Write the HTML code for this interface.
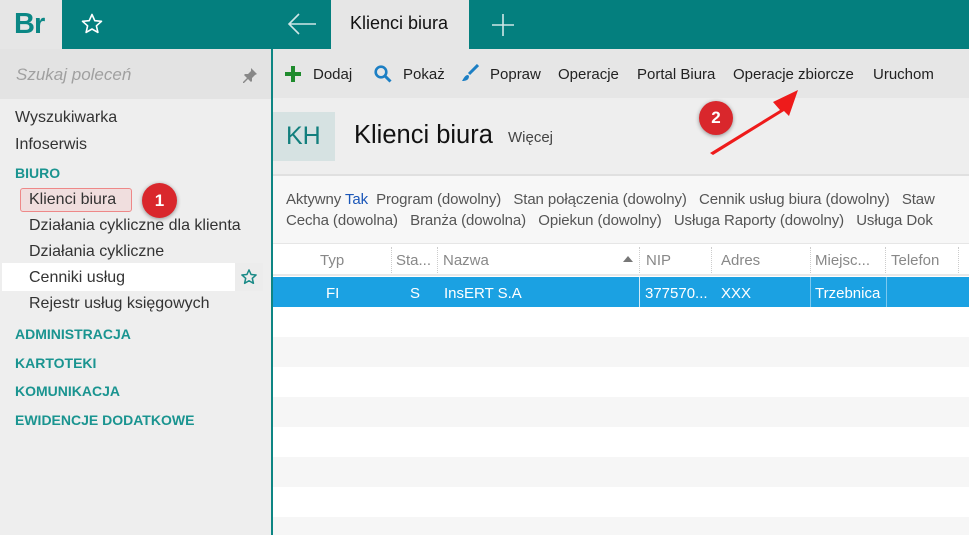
<!DOCTYPE html>
<html><head><meta charset="utf-8"><style>
*{margin:0;padding:0;box-sizing:border-box}
body{width:969px;height:535px;overflow:hidden;font-family:"Liberation Sans",sans-serif;background:#fff;position:relative;color:#222}
.abs{position:absolute}
.t{white-space:nowrap}
</style></head><body>
<div class="abs" style="left:0;top:0;width:969px;height:49px;background:#047f7e"></div>
<div class="abs" style="left:0;top:0;width:62px;height:49px;background:#e6e6e6"></div>
<div class="abs t" style="left:14px;top:8px;font-size:29px;color:#0b8785;font-weight:bold;letter-spacing:-1px">Br</div>
<svg class="abs" style="left:80px;top:12px" width="24" height="24" viewBox="0 0 24 24"><path d="M12 2.5l2.8 6.2 6.7.6-5.1 4.5 1.5 6.6L12 17l-5.9 3.4 1.5-6.6-5.1-4.5 6.7-.6z" fill="none" stroke="#fff" stroke-width="1.6" stroke-linejoin="round"/></svg>
<svg class="abs" style="left:287px;top:12px" width="30" height="24" viewBox="0 0 30 24"><path d="M2 12h27M12 2L2 12l10 10" fill="none" stroke="#cfe6e6" stroke-width="1.6"/></svg>
<div class="abs" style="left:331px;top:0;width:138px;height:49px;background:#e6e6e6"></div>
<div class="abs t" style="left:350px;top:13px;font-size:18px;color:#111">Klienci biura</div>
<svg class="abs" style="left:491px;top:13px" width="24" height="24"><path d="M12 1v22M1 12h22" stroke="#cfe6e6" stroke-width="1.6"/></svg>
<div class="abs" style="left:0;top:49px;width:271px;height:486px;background:#eeeeee"></div>
<div class="abs" style="left:0;top:49px;width:271px;height:50px;background:#e3e3e3"></div>
<div class="abs t" style="left:16px;top:65px;font-size:17px;font-style:italic;color:#a0a0a0">Szukaj poleceń</div>
<svg class="abs" style="left:242px;top:67px" width="16" height="16" viewBox="0 0 16 16"><path d="M9 1l6 6-2 1-3 3 0 3-1 1-3-3-4 4-1 0 0-1 4-4-3-3 1-1 3 0 3-3z" fill="#888"/></svg>
<div class="abs" style="left:271px;top:49px;width:2px;height:486px;background:#0d8583"></div>
<div class="abs t" style="left:15px;top:109px;font-size:16px;color:#333">Wyszukiwarka</div>
<div class="abs t" style="left:15px;top:136px;font-size:16px;color:#333">Infoserwis</div>
<div class="abs t" style="left:15px;top:165px;font-size:14px;font-weight:bold;color:#1a9490">BIURO</div>
<div class="abs" style="left:20px;top:188px;width:112px;height:24px;background:#f0dede;border:1.5px solid #e88;border-radius:3px"></div>
<div class="abs t" style="left:29px;top:191px;font-size:16px;color:#333">Klienci biura</div>
<div class="abs" style="left:142px;top:183px;width:35px;height:35px;border-radius:50%;background:#d9272c;box-shadow:0 1px 4px rgba(0,0,0,.4);color:#fff;font-weight:bold;font-size:17px;text-align:center;line-height:35px">1</div>
<div class="abs t" style="left:29px;top:217px;font-size:16px;color:#333">Działania cykliczne dla klienta</div>
<div class="abs t" style="left:29px;top:243px;font-size:16px;color:#333">Działania cykliczne</div>
<div class="abs" style="left:2px;top:263px;width:261px;height:28px;background:#fff"></div>
<div class="abs" style="left:235px;top:263px;width:28px;height:28px;background:#ececec"></div>
<svg class="abs" style="left:240px;top:268px" width="18" height="18" viewBox="0 0 24 24"><path d="M12 2.5l2.8 6.2 6.7.6-5.1 4.5 1.5 6.6L12 17l-5.9 3.4 1.5-6.6-5.1-4.5 6.7-.6z" fill="none" stroke="#1a8a87" stroke-width="2" stroke-linejoin="round"/></svg>
<div class="abs t" style="left:29px;top:269px;font-size:16px;color:#333">Cenniki usług</div>
<div class="abs t" style="left:29px;top:295px;font-size:16px;color:#333">Rejestr usług księgowych</div>
<div class="abs t" style="left:15px;top:326px;font-size:14px;font-weight:bold;color:#1a9490">ADMINISTRACJA</div>
<div class="abs t" style="left:15px;top:355px;font-size:14px;font-weight:bold;color:#1a9490">KARTOTEKI</div>
<div class="abs t" style="left:15px;top:383px;font-size:14px;font-weight:bold;color:#1a9490">KOMUNIKACJA</div>
<div class="abs t" style="left:15px;top:412px;font-size:14px;font-weight:bold;color:#1a9490">EWIDENCJE DODATKOWE</div>
<div class="abs" style="left:273px;top:49px;width:696px;height:49px;background:#e6e6e6"></div>
<svg class="abs" style="left:285px;top:66px" width="16" height="16"><path d="M8 0v16M0 8h16" stroke="#1f8b2d" stroke-width="4"/></svg>
<div class="abs t" style="left:313px;top:66px;font-size:15px;color:#222">Dodaj</div>
<svg class="abs" style="left:374px;top:65px" width="18" height="18"><circle cx="7" cy="7" r="5.3" fill="none" stroke="#1c7fc4" stroke-width="2.6"/><path d="M11 11l5.5 5.5" stroke="#1c7fc4" stroke-width="3"/></svg>
<div class="abs t" style="left:403px;top:66px;font-size:15px;color:#222">Pokaż</div>
<svg class="abs" style="left:461px;top:64px" width="18" height="18"><path d="M17 1L8 10" stroke="#1c7fc4" stroke-width="3"/><path d="M7 11c-3 0-4 3-6 6 4 0 7-1 7-5z" fill="#1c7fc4"/></svg>
<div class="abs t" style="left:490px;top:66px;font-size:15px;color:#222">Popraw</div>
<div class="abs t" style="left:558px;top:66px;font-size:15px;color:#222">Operacje</div>
<div class="abs t" style="left:637px;top:66px;font-size:15px;color:#222">Portal Biura</div>
<div class="abs t" style="left:733px;top:66px;font-size:15px;color:#222">Operacje zbiorcze</div>
<div class="abs t" style="left:873px;top:66px;font-size:15px;color:#222">Uruchom</div>
<div class="abs" style="left:273px;top:98px;width:696px;height:77px;background:#eeeeee"></div>
<div class="abs" style="left:273px;top:112px;width:62px;height:49px;background:#d6e2e2"></div>
<div class="abs t" style="left:286px;top:122px;font-size:25px;color:#127f7d">KH</div>
<div class="abs t" style="left:354px;top:121px;font-size:25.5px;color:#111">Klienci biura</div>
<div class="abs t" style="left:508px;top:129px;font-size:15px;color:#444">Więcej</div>
<div class="abs" style="left:273px;top:174px;width:696px;height:2px;background:#e0e0e0"></div>
<div class="abs" style="left:273px;top:176px;width:696px;height:67px;background:#f7f7f7"></div>
<div class="abs t" style="left:286px;top:191px;font-size:15px;color:#555;letter-spacing:-0.1px">Aktywny <span style="color:#1a56b8">Tak</span>&nbsp; Program (dowolny)&nbsp;&nbsp; Stan połączenia (dowolny)&nbsp;&nbsp; Cennik usług biura (dowolny)&nbsp;&nbsp; Staw</div>
<div class="abs t" style="left:286px;top:212px;font-size:15px;color:#555;letter-spacing:-0.1px">Cecha (dowolna)&nbsp;&nbsp; Branża (dowolna)&nbsp;&nbsp; Opiekun (dowolny)&nbsp;&nbsp; Usługa Raporty (dowolny)&nbsp;&nbsp; Usługa Dok</div>
<div class="abs" style="left:273px;top:243px;width:696px;height:1px;background:#e6e6e6"></div>
<div class="abs" style="left:273px;top:244px;width:696px;height:32px;background:#fff;border-bottom:2px solid #e8e8e8"></div>
<div class="abs t" style="left:320px;top:252px;font-size:15px;color:#888">Typ</div>
<div class="abs" style="left:391px;top:247px;height:26px;border-left:1px dotted #ccc"></div>
<div class="abs t" style="left:396px;top:252px;font-size:15px;color:#888">Sta...</div>
<div class="abs" style="left:437px;top:247px;height:26px;border-left:1px dotted #ccc"></div>
<div class="abs t" style="left:443px;top:252px;font-size:15px;color:#888">Nazwa</div>
<svg class="abs" style="left:623px;top:256px" width="10" height="6"><path d="M0 6L5 0l5 6z" fill="#777"/></svg>
<div class="abs" style="left:639px;top:247px;height:26px;border-left:1px dotted #ccc"></div>
<div class="abs t" style="left:646px;top:252px;font-size:15px;color:#888">NIP</div>
<div class="abs" style="left:711px;top:247px;height:26px;border-left:1px dotted #ccc"></div>
<div class="abs t" style="left:721px;top:252px;font-size:15px;color:#888">Adres</div>
<div class="abs" style="left:810px;top:247px;height:26px;border-left:1px dotted #ccc"></div>
<div class="abs t" style="left:815px;top:252px;font-size:15px;color:#888">Miejsc...</div>
<div class="abs" style="left:885px;top:247px;height:26px;border-left:1px dotted #ccc"></div>
<div class="abs t" style="left:891px;top:252px;font-size:15px;color:#888">Telefon</div>
<div class="abs" style="left:958px;top:247px;height:26px;border-left:1px dotted #ccc"></div>
<div class="abs" style="left:273px;top:277px;width:696px;height:30px;background:#1ba1e2"></div>
<div class="abs" style="left:639px;top:277px;width:1px;height:30px;background:#cfe9f7"></div>
<div class="abs" style="left:810px;top:277px;width:1px;height:30px;background:#7cc8ef"></div>
<div class="abs" style="left:886px;top:277px;width:1px;height:30px;background:#7cc8ef"></div>
<div class="abs t" style="left:326px;top:285px;font-size:15px;color:#fff">FI</div>
<div class="abs t" style="left:410px;top:285px;font-size:15px;color:#fff">S</div>
<div class="abs t" style="left:444px;top:285px;font-size:15px;color:#fff">InsERT S.A</div>
<div class="abs t" style="left:645px;top:285px;font-size:15px;color:#fff">377570...</div>
<div class="abs t" style="left:721px;top:285px;font-size:15px;color:#fff">XXX</div>
<div class="abs t" style="left:815px;top:285px;font-size:15px;color:#fff">Trzebnica</div>
<div class="abs" style="left:273px;top:337px;width:696px;height:30px;background:#f6f6f6"></div>
<div class="abs" style="left:273px;top:397px;width:696px;height:30px;background:#f6f6f6"></div>
<div class="abs" style="left:273px;top:457px;width:696px;height:30px;background:#f6f6f6"></div>
<div class="abs" style="left:273px;top:517px;width:696px;height:18px;background:#f6f6f6"></div>
<svg class="abs" style="left:700px;top:80px" width="110" height="80"><path d="M10 73L80 30 73 22 98 10 89 36 84 31 13 75z" fill="#ee1b1b"/></svg>
<div class="abs" style="left:699px;top:101px;width:34px;height:34px;border-radius:50%;background:#d9272c;box-shadow:0 1px 4px rgba(0,0,0,.4);color:#fff;font-weight:bold;font-size:17px;text-align:center;line-height:34px">2</div>
</body></html>
